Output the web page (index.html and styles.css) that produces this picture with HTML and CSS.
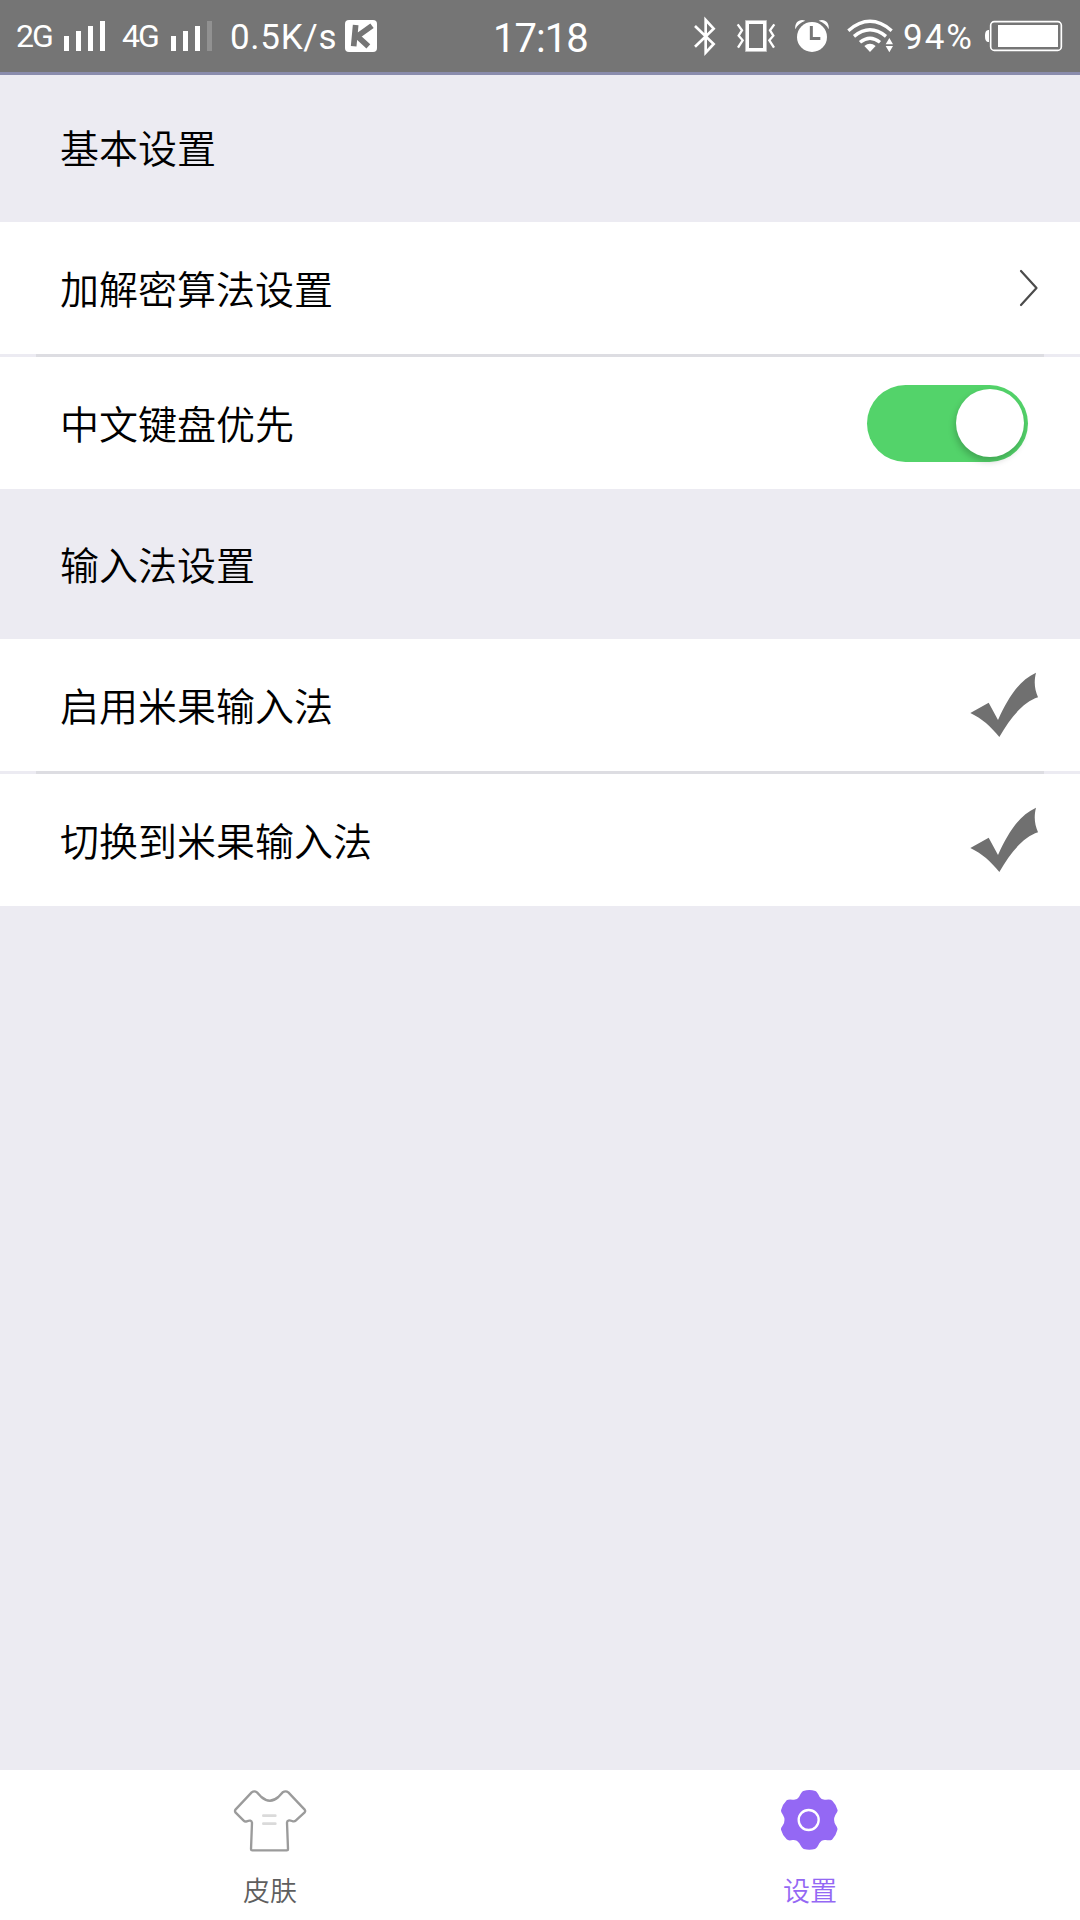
FILE: index.html
```html
<!DOCTYPE html>
<html lang="zh-CN">
<head>
<meta charset="utf-8">
<title>设置</title>
<link rel="stylesheet" href="styles.css">
</head>
<body>
<div class="screen">
  <header class="status">
    <div class="status-left">
      <span class="net net-2g">2G</span>
      <svg class="bars" viewBox="186 0 135 216"><path fill="#fff" d="M192 108h15v45h-15zM228 93h15v60h-15zM264 78h15v75h-15zM300 63h15v90h-15z"/></svg>
      <span class="net net-4g">4G</span>
      <svg class="bars" viewBox="507 0 135 216"><path fill="#fff" d="M513 108h15v45h-15zM549 93h15v60h-15zM585 78h15v75h-15z"/><path fill="#919191" d="M621 63h15v90h-15z"/></svg>
      <span class="speed">0.5K/s</span>
      <svg class="k-badge" viewBox="1035 0 96 216"><rect x="1035" y="60" width="96" height="96" rx="12" fill="#fff"/><path fill="none" stroke="#757575" stroke-width="17" d="M1067 75L1061 139M1116 77L1072 109L1105 139"/></svg>
    </div>
    <div class="time">17:18</div>
    <div class="status-right">
      <svg class="bluetooth" viewBox="39 0 72 216"><path fill="none" stroke="#fff" stroke-width="8" d="M45 78L101 132L77 158V60L101 86L45 140"/></svg>
      <svg class="vibrate" viewBox="168 0 120 216"><path fill="none" stroke="#fff" stroke-opacity=".55" stroke-width="3" d="M196.500 61.500h63v93h-63z"/><path fill="none" stroke="#fff" stroke-width="9" d="M202.500 67.500h51v81h-51z"/><path fill="none" stroke="#fff" stroke-width="7" d="M173 73L186 91L176 107L188 121L174 143M283 73L270 91L280 107L268 121L282 143"/></svg>
      <svg class="alarm" viewBox="342 0 108 216"><path fill="#fff" d="M346 88C343 68 358 55 376 62C362 67 351 76 346 88ZM446 88C449 68 434 55 416 62C430 67 441 76 446 88Z"/><circle cx="396" cy="111" r="45" fill="#fff"/><path fill="none" stroke="#757575" stroke-width="9" d="M394 78V115.500H421"/></svg>
      <svg class="wifi" viewBox="501 0 141 216"><path fill="none" stroke="#fff" stroke-width="10" d="M505 92Q570 36 635 92M522 109Q570 70 618 109M540 127Q570 102 600 127"/><path fill="#fff" d="M553 138Q570 125 587 138L570 156ZM617 133L628 114L639 133ZM617 138H639L628 157Z"/></svg>
      <span class="percent">94%</span>
      <svg class="battery" viewBox="912 0 237 216"><path fill="#fff" d="M927 90C918 90 915 96 915 108S918 126 927 126Z"/><rect x="932" y="65" width="212" height="86" rx="11" fill="none" stroke="#fff" stroke-width="5"/><path fill="#fff" d="M954 75h180v66H954z"/></svg>
    </div>
  </header>

  <main class="content">
    <h2 class="heading">基本设置</h2>
    <section class="group">
      <div class="row"><span>加解密算法设置</span>
        <svg class="chevron" viewBox="0 0 20 38"><path d="M2 2L17.500 19L2 36"/></svg>
      </div>
      <div class="divider"></div>
      <div class="row"><span>中文键盘优先</span><div class="toggle"><div class="knob"></div></div></div>
    </section>
    <h2 class="heading heading-second">输入法设置</h2>
    <section class="group">
      <div class="row"><span>启用米果输入法</span>
        <svg class="check" viewBox="150 126 206 198"><path d="M151 249L206 218L234 270C265 200 300 149 348 128C341 157 344 177 354 202C310 216 272 262 238 321C213 290 185 265 151 249Z"/></svg>
      </div>
      <div class="divider"></div>
      <div class="row"><span>切换到米果输入法</span>
        <svg class="check" viewBox="150 126 206 198"><path d="M151 249L206 218L234 270C265 200 300 149 348 128C341 157 344 177 354 202C310 216 272 262 238 321C213 290 185 265 151 249Z"/></svg>
      </div>
    </section>
  </main>

  <nav class="tabs">
    <div class="tab">
      <svg class="tab-icon" viewBox="99 60 222 255"><g fill="none" stroke-linecap="round" stroke-linejoin="round"><path stroke="#9b9b9b" stroke-width="7" d="M171 127Q163 121 155 127L107 178Q103 183 107 188L131 212Q135 216 140 214Q154 208 156 218L153 298Q153 301 157 301H260Q264 301 264 297L261 218Q262 208 276 213Q283 216 287 212L314 187Q317 183 314 179L265 127Q257 121 248 127L235 141Q210 163 184 141Z"/><path stroke="#dadada" stroke-width="8" d="M190 197H226M190 221H226"/></g></svg>
      <span>皮肤</span>
    </div>
    <div class="tab active">
      <svg class="tab-icon" viewBox="99 60 222 255"><path fill="#9468f4" d="M190 123Q208 117 226 123Q231 125 239 141Q245 151 258 149Q272 147 277 152Q289 164 293 181Q293 187 286 195Q278 210 287 225Q294 235 292 240Q288 257 276 269Q271 272 257 270Q244 269 238 280Q231 295 225 297Q208 302 191 297Q186 295 178 280Q171 269 158 270Q145 273 140 268Q128 257 123 239Q122 234 129 225Q138 210 129 195Q122 187 123 181Q127 164 140 151Q145 147 158 149Q171 151 177 141Q185 125 190 123Z"/><circle cx="206" cy="210" r="30" fill="none" stroke="#fff" stroke-width="7"/></svg>
      <span>设置</span>
    </div>
  </nav>
</div>
</body>
</html>
```
FILE: styles.css
```css
* { box-sizing: border-box; }
body { margin: 0; background: #ecebf2; }
.screen {
  width: 1080px;
  height: 1920px;
  display: flex;
  flex-direction: column;
  font-family: "Noto Sans CJK SC", sans-serif;
  font-weight: 350;
  color: #000;
}

/* status bar */
.status {
  height: 75px;
  flex: none;
  display: flex;
  background: #757575;
  border-bottom: 3px solid #8a8cad;
  color: #fff;
  font-family: Roboto, sans-serif;
  font-weight: 400;
  line-height: 72px;
  white-space: nowrap;
}
.status-left, .status-right { display: flex; }
.status-left { width: 493px; padding-left: 16px; }
.status svg { height: 72px; flex: none; }
.net { font-size: 32px; letter-spacing: -2px; width: 46px; }
.net-4g { width: 47px; margin-left: 15px; }
.bars { width: 45px; }
.speed { font-size: 35px; width: 105px; margin-left: 16px; padding-top: 2px; letter-spacing: .7px; }
.k-badge { width: 32px; margin-left: 10px; }
.time { width: 200px; font-size: 40px; padding-top: 3px; letter-spacing: -1px; }
.bluetooth { width: 24px; }
.vibrate { width: 40px; margin-left: 19px; }
.alarm { width: 36px; margin-left: 18px; }
.wifi { width: 47px; margin-left: 17px; }
.percent { font-size: 35px; width: 87px; padding: 2px 0 0 9px; letter-spacing: 2px; }
.battery { width: 79px; margin-left: 3px; }

/* settings list */
.content { flex: 1; }
.heading {
  margin: 0;
  height: 147px;
  padding: 0 0 6px 60px;
  display: flex;
  align-items: center;
  font-size: 39px;
  font-weight: inherit;
}
.heading-second { height: 150px; padding-bottom: 2px; }
.group { background: #fff; }
.row {
  height: 132px;
  padding: 0 41px 0 60px;
  display: flex;
  align-items: center;
  justify-content: space-between;
  font-size: 39px;
}
.row span { padding-bottom: 2px; }
.divider {
  height: 3px;
  padding: 0 36px;
  background: #dddde2;
  box-shadow: inset 36px 0 #ecebf2, inset -36px 0 #ecebf2;
}
.chevron { width: 20px; height: 38px; }
.chevron path { fill: none; stroke: #4b4b4b; stroke-width: 2.2; stroke-linecap: round; stroke-linejoin: round; }
.check { width: 68.700px; height: 66px; }
.check path { fill: #707070; }
.toggle {
  width: 161px;
  height: 77px;
  margin-right: 11px;
  padding: 4.500px;
  border-radius: 39px;
  background: #53d36a;
  display: flex;
  justify-content: flex-end;
}
.knob {
  width: 68px;
  height: 68px;
  border-radius: 50%;
  background: #fff;
  box-shadow: -1px 4px 7px rgba(0, 0, 0, .22);
}

/* bottom tabs */
.tabs { height: 150px; flex: none; display: flex; background: #fff; }
.tab {
  flex: 1;
  display: flex;
  flex-direction: column;
  align-items: center;
  font-size: 27px;
  line-height: 40px;
  color: #5e5e5e;
}
.tab-icon { width: 74px; height: 85px; margin-bottom: 15px; }
.active { color: #9468f4; }
```
